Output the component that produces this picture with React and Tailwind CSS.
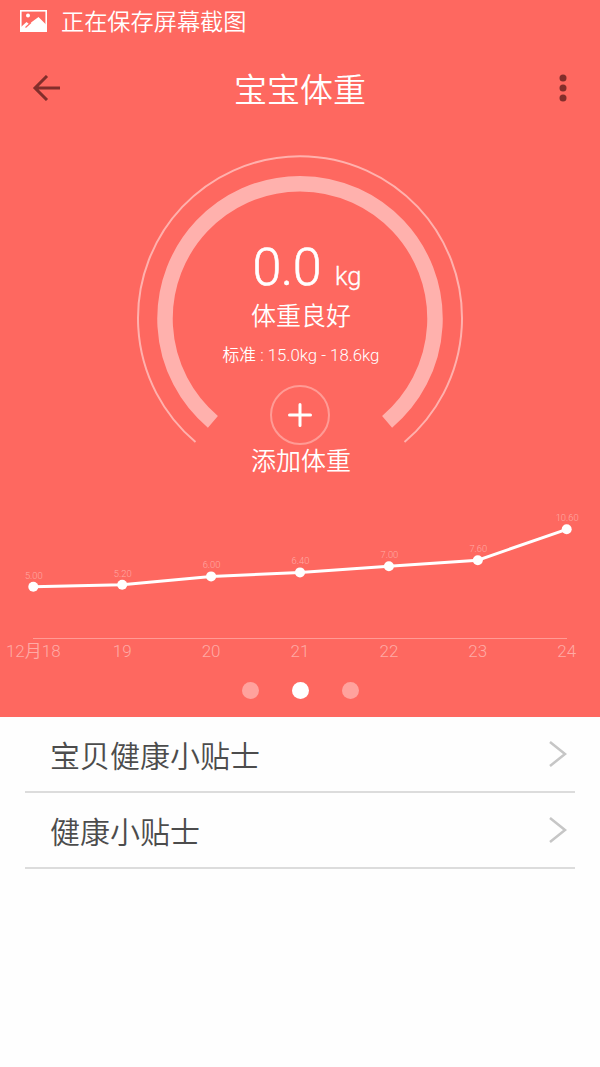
import { clsx } from 'clsx';

const weights = [
  { day: '12月18', label: '5.00', x: 33.3, y: 586.8 },
  { day: '19', label: '5.20', x: 122.2, y: 584.7 },
  { day: '20', label: '6.00', x: 211.1, y: 576.4 },
  { day: '21', label: '6.40', x: 300, y: 572.4 },
  { day: '22', label: '7.00', x: 388.9, y: 566.3 },
  { day: '23', label: '7.60', x: 477.8, y: 560.2 },
  { day: '24', label: '10.60', x: 566.7, y: 529.3 },
];

const tips = ['宝贝健康小贴士', '健康小贴士'];

function StatusBar() {
  return (
    <div className="flex h-[42px] items-center pl-5 text-[23.2px]">
      <svg width="27" height="22" viewBox="0 0 27 22" className="mr-[14px]">
        <rect x="0.8" y="0.8" width="25.4" height="20.4" fill="none" stroke="white" strokeWidth="1.6" />
        <circle cx="8" cy="5.5" r="2" fill="white" />
        <path d="M1 21V17L6.5 12L9 14L18.5 7L26 14.5V21Z" fill="white" />
        <path d="M5.5 17.5L11 12.5" stroke="#fe6860" strokeWidth="1.2" />
      </svg>
      <span className="pt-[3px] leading-none">正在保存屏幕截图</span>
    </div>
  );
}

function Header() {
  return (
    <div className="grid h-[92px] grid-cols-[1fr_auto_1fr] items-center pr-[32px] pl-[32px]">
      <button className="justify-self-start">
        <svg width="28" height="26" viewBox="0 0 28 26" fill="none" stroke="#822e2b" strokeWidth="3">
          <path d="M28 13H3M15 1L3 13L15 25" />
        </svg>
      </button>
      <h1 className="pt-[4px] text-[33px] leading-none">宝宝体重</h1>
      <button className="justify-self-end">
        <svg width="10" height="28" viewBox="0 0 10 28" fill="#822e2b">
          <circle cx="5" cy="4" r="3.5" />
          <circle cx="5" cy="14" r="3.5" />
          <circle cx="5" cy="24" r="3.5" />
        </svg>
      </button>
    </div>
  );
}

function Gauge() {
  return (
    <div className="grid h-[354px] justify-center">
      <svg
        width="330"
        height="300"
        viewBox="135 150 330 300"
        fill="none"
        stroke="#ffb1ad"
        className="col-start-1 row-start-1 mt-4"
      >
        <path d="M195.5 442A162 162 0 1 1 404.5 442" strokeWidth="2" />
        <path d="M212.9 421.8A135 135 0 1 1 387.1 421.8" strokeWidth="15.5" />
      </svg>
      <div className="col-start-1 row-start-1 flex flex-col items-center pt-[104px] whitespace-nowrap">
        <div className="flex h-[60px] items-baseline pl-[14px] leading-[60px]">
          <span className="text-[52px] tracking-[-0.5px] [-webkit-text-stroke:0.6px_white]">0.0</span>
          <span className="ml-[14px] text-[25.5px] [-webkit-text-stroke:0.3px_white]">kg</span>
        </div>
        <div className="mt-[3px] pl-[2px] text-[25px] leading-[32px]">体重良好</div>
        <div className="mt-[10px] pl-[2px] text-[16.8px] leading-6">标准 : 15.0kg - 18.6kg</div>
        <button className="mt-[18px] flex size-[60px] items-center justify-center rounded-full border-2 border-[#ff9b95]">
          <svg width="24" height="24" viewBox="0 0 24 24" stroke="white" strokeWidth="3" strokeLinecap="round">
            <path d="M12 1.5V22.5M1.5 12H22.5" />
          </svg>
        </button>
        <div className="mt-px pl-[2px] text-[25px] leading-[32px]">添加体重</div>
      </div>
    </div>
  );
}

function WeightChart() {
  const points = weights.map((w) => `${w.x},${w.y}`).join(' ');

  return (
    <svg width="600" height="182" viewBox="0 488 600 182" className="block" textAnchor="middle">
      <path d="M33 638.5H567" stroke="#ff9b95" strokeWidth="1" />
      <polyline points={points} fill="none" stroke="white" strokeWidth="3" />
      {weights.map((w) => (
        <g key={w.day}>
          <circle cx={w.x} cy={w.y} r="5" fill="white" />
          <text x={w.x + 0.5} y={w.y - 8} fontSize="9.4" fill="#ffaaa5">{w.label}</text>
          <text x={w.x} y="657" fontSize="17" fill="#ffaaa5">{w.day}</text>
        </g>
      ))}
    </svg>
  );
}

function Pager({ active }) {
  return (
    <div className="flex justify-center gap-[33px] pt-[12px]">
      {[0, 1, 2].map((i) => (
        <span
          key={i}
          className={clsx('size-[17px] rounded-full', i === active ? 'bg-white' : 'bg-[#ffa29d]')}
        />
      ))}
    </div>
  );
}

export default function App() {
  return (
    <div className="min-h-[1067px] w-[600px] bg-[#fefefe] font-[Roboto,'Noto_Sans_CJK_SC',sans-serif] font-[350]">
      <div className="h-[717px] bg-[#fe6860] text-white">
        <StatusBar />
        <Header />
        <Gauge />
        <WeightChart />
        <Pager active={1} />
      </div>
      <ul className="px-[25px]">
        {tips.map((tip) => (
          <li
            key={tip}
            className="flex h-[76px] items-center justify-between border-b-2 border-[#dcdcdc] pr-[8px] pl-[25px] text-[30px] text-[#4c4c4c]"
          >
            <span className="pt-[5px] leading-none">{tip}</span>
            <svg width="18" height="26" viewBox="0 0 18 26" fill="none" stroke="#c6c6c6" strokeWidth="2.5">
              <path d="M1 1L16 13L1 25" />
            </svg>
          </li>
        ))}
      </ul>
    </div>
  );
}
